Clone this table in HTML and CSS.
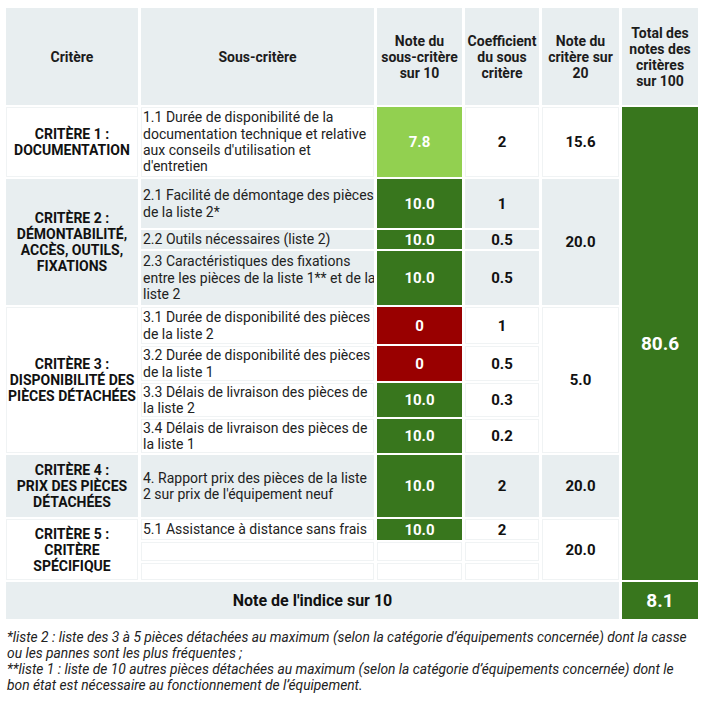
FILE: index.html
```html
<!DOCTYPE html>
<html lang="fr">
<head>
<meta charset="utf-8">
<title>Indice de réparabilité</title>
<link rel="stylesheet" href="styles.css">
</head>
<body>
<table class="grid">
  <colgroup>
    <col class="c-crit"><col class="c-sub"><col class="c-note"><col class="c-coef"><col class="c-nc"><col class="c-tot">
  </colgroup>
  <thead>
    <tr class="h-head">
      <th>Critère</th>
      <th>Sous-critère</th>
      <th>Note du<br>sous-critère<br>sur 10</th>
      <th>Coefficient<br>du sous<br>critère</th>
      <th>Note du<br>critère sur<br>20</th>
      <th>Total des<br>notes des<br>critères<br>sur 100</th>
    </tr>
  </thead>
  <tbody>
    <tr class="h70">
      <td class="crit w">CRITÈRE 1 :<br>DOCUMENTATION</td>
      <td class="sub w">1.1 Durée de disponibilité de la<br>documentation technique et relative<br>aux conseils d'utilisation et<br>d'entretien</td>
      <td class="note light">7.8</td>
      <td class="num w">2</td>
      <td class="num w">15.6</td>
      <td class="total" rowspan="12">80.6</td>
    </tr>
    <tr class="h49">
      <td class="crit g" rowspan="3">CRITÈRE 2 :<br>DÉMONTABILITÉ,<br>ACCÈS, OUTILS,<br>FIXATIONS</td>
      <td class="sub g">2.1 Facilité de démontage des pièces<br>de la liste 2*</td>
      <td class="note dark">10.0</td>
      <td class="num g">1</td>
      <td class="num g" rowspan="3">20.0</td>
    </tr>
    <tr class="h19">
      <td class="sub g">2.2 Outils nécessaires (liste 2)</td>
      <td class="note dark">10.0</td>
      <td class="num g">0.5</td>
    </tr>
    <tr class="h54">
      <td class="sub g">2.3 Caractéristiques des fixations<br>entre les pièces de la liste 1** et de la<br>liste 2</td>
      <td class="note dark">10.0</td>
      <td class="num g">0.5</td>
    </tr>
    <tr class="h37">
      <td class="crit w" rowspan="4">CRITÈRE 3 :<br>DISPONIBILITÉ DES<br>PIÈCES DÉTACHÉES</td>
      <td class="sub w">3.1 Durée de disponibilité des pièces<br>de la liste 2</td>
      <td class="note red">0</td>
      <td class="num w">1</td>
      <td class="num w" rowspan="4">5.0</td>
    </tr>
    <tr class="h35">
      <td class="sub w">3.2 Durée de disponibilité des pièces<br>de la liste 1</td>
      <td class="note red">0</td>
      <td class="num w">0.5</td>
    </tr>
    <tr class="h34">
      <td class="sub w">3.3 Délais de livraison des pièces de<br>la liste 2</td>
      <td class="note dark">10.0</td>
      <td class="num w">0.3</td>
    </tr>
    <tr class="h34">
      <td class="sub w">3.4 Délais de livraison des pièces de<br>la liste 1</td>
      <td class="note dark">10.0</td>
      <td class="num w">0.2</td>
    </tr>
    <tr class="h62">
      <td class="crit g">CRITÈRE 4 :<br>PRIX DES PIÈCES<br>DÉTACHÉES</td>
      <td class="sub g">4. Rapport prix des pièces de la liste<br>2 sur prix de l'équipement neuf</td>
      <td class="note dark">10.0</td>
      <td class="num g">2</td>
      <td class="num g">20.0</td>
    </tr>
    <tr class="h21">
      <td class="crit w" rowspan="3">CRITÈRE 5 :<br>CRITÈRE<br>SPÉCIFIQUE</td>
      <td class="sub w">5.1 Assistance à distance sans frais</td>
      <td class="note dark">10.0</td>
      <td class="num w">2</td>
      <td class="num w" rowspan="3">20.0</td>
    </tr>
    <tr class="h19">
      <td class="sub w"></td>
      <td class="num w"></td>
      <td class="num w"></td>
    </tr>
    <tr class="h17">
      <td class="sub w"></td>
      <td class="num w"></td>
      <td class="num w"></td>
    </tr>
    <tr class="h37">
      <td class="index-label" colspan="5">Note de l'indice sur 10</td>
      <td class="index-value">8.1</td>
    </tr>
  </tbody>
</table>
<div class="notes">
  <p>*liste 2 : liste des 3 à 5 pièces détachées au maximum (selon la catégorie d’équipements concernée) dont la casse<br>ou les pannes sont les plus fréquentes ;</p>
  <p>**liste 1 : liste de 10 autres pièces détachées au maximum (selon la catégorie d’équipements concernée) dont le<br>bon état est nécessaire au fonctionnement de l’équipement.</p>
</div>
</body>
</html>
```
FILE: styles.css
```css
html, body {
  margin: 0;
  padding: 0;
  background: #ffffff;
}
body {
  font-family: Roboto, "Liberation Sans", Arial, sans-serif;
  color: #1a1a1a;
}
.grid {
  table-layout: fixed;
  width: 698px;
  border-collapse: separate;
  border-spacing: 3px 2px;
  margin: 6px 0 0 3px;
}
.c-crit { width: 132px; }
.c-sub { width: 233px; }
.c-note { width: 85px; }
.c-coef { width: 74px; }
.c-nc { width: 77px; }
.c-tot { width: 76px; }

th, td {
  padding: 0 2px;
  vertical-align: middle;
  box-sizing: border-box;
}
.h-head { height: 97px; }
.h-head th {
  background: #e8eef0;
  font-size: 14px;
  font-weight: 700;
  line-height: 16px;
  text-align: center;
  color: #1c1c1c;
}
.h70 { height: 70px; }
.h49 { height: 49px; }
.h19 { height: 19px; }
.h54 { height: 54px; }
.h37 { height: 37px; }
.h35 { height: 35px; }
.h34 { height: 34px; }
.h62 { height: 62px; }
.h21 { height: 21px; }
.h17 { height: 17px; }

.w {
  background: #ffffff;
  box-shadow: inset 0 0 0 1px #f0f3f4;
}
.g { background: #e8eef0; }

.crit {
  font-size: 14px;
  font-weight: 700;
  line-height: 16px;
  text-align: center;
  color: #111;
}
.sub {
  font-size: 14px;
  line-height: 16.4px;
  text-align: left;
  padding: 0 0 0 2px;
  white-space: nowrap;
  overflow: hidden;
  color: #222;
}
.num {
  font-size: 15px;
  font-weight: 700;
  text-align: center;
  color: #111;
}
.note {
  font-size: 15px;
  font-weight: 700;
  text-align: center;
  color: #ffffff;
}
.dark { background: #38761d; }
.light { background: #92d050; }
.red { background: #990000; }
.total {
  background: #38761d;
  color: #ffffff;
  font-size: 19px;
  font-weight: 700;
  text-align: center;
}
.index-label {
  background: #e8eef0;
  font-size: 16px;
  font-weight: 700;
  text-align: center;
  color: #111;
}
.index-value {
  background: #38761d;
  color: #ffffff;
  font-size: 19px;
  font-weight: 700;
  text-align: center;
}
.notes {
  width: 700px;
  margin: 8px 0 0 7px;
  font-size: 13.8px;
  font-style: italic;
  line-height: 16px;
  color: #222;
  white-space: nowrap;
}
.notes p {
  margin: 0;
}
```
